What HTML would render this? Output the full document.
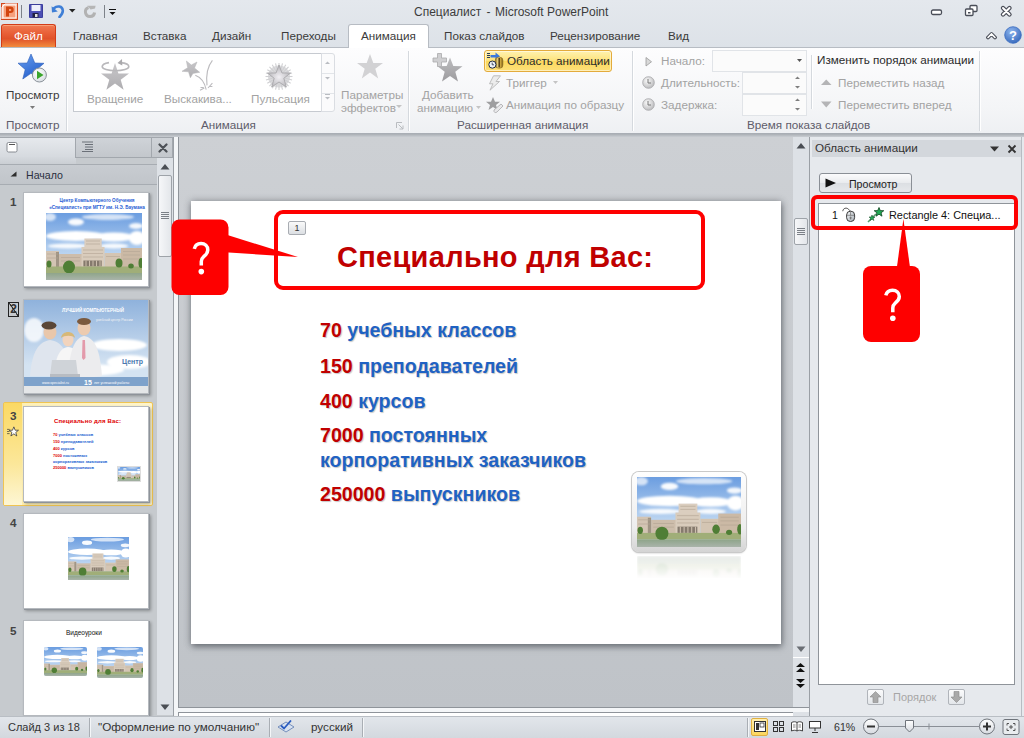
<!DOCTYPE html>
<html><head><meta charset="utf-8">
<style>
*{margin:0;padding:0;box-sizing:border-box}
html,body{width:1024px;height:738px;overflow:hidden;background:#dfe4ea;font-family:"Liberation Sans",sans-serif;font-size:11.7px;color:#3b3b3b}
.a{position:absolute}
.t{position:absolute;white-space:nowrap;line-height:14px}
.dis{color:#a3a3a3}
.gl{position:absolute;white-space:nowrap;color:#5e5c6a;top:117.5px;line-height:14px}
.sep{position:absolute;top:51px;height:80px;width:1px;background:#d5d9de;box-shadow:1px 0 0 #fff}
.th{background:#fff;box-shadow:1px 1px 0 #8e939a,2px 2px 3px rgba(0,0,0,.3);border:1px solid #b5b9be;overflow:hidden}
.photo{background:linear-gradient(#6e9bd6 0%,#a8c6ea 20%,#e9f0f6 38%,#cfdff0 45%,#d9cbbb 50%,#c4ad95 62%,#a68f78 72%,#4f6f3a 80%,#8ea48c 86%,#b9c6c0 100%)}
</style></head><body>
<svg width="0" height="0" style="position:absolute">
<defs>
<linearGradient id="sky" x1="0" y1="0" x2="0" y2="1"><stop offset="0" stop-color="#6b9de0"/><stop offset="0.6" stop-color="#b9d3f0"/></linearGradient>
<linearGradient id="wat" x1="0" y1="0" x2="0" y2="1"><stop offset="0" stop-color="#8fa58a"/><stop offset="1" stop-color="#a9b4aa"/></linearGradient>
<filter id="bl" x="-20%" y="-50%" width="140%" height="200%"><feGaussianBlur stdDeviation="1.2"/></filter>
<filter id="bl2"><feGaussianBlur stdDeviation="0.5"/></filter>
<symbol id="ph" viewBox="0 0 96 67" preserveAspectRatio="none">
<rect width="96" height="67" fill="url(#sky)"/>
<g fill="#fff" filter="url(#bl)">
<ellipse cx="30" cy="9" rx="8" ry="3.5" opacity="0.95"/>
<ellipse cx="62" cy="4" rx="26" ry="3" opacity="0.7"/>
<ellipse cx="4" cy="4" rx="6" ry="4" opacity="0.7"/>
<ellipse cx="90" cy="13" rx="7" ry="3" opacity="0.9"/>
<ellipse cx="30" cy="23" rx="30" ry="5"/>
<ellipse cx="68" cy="24" rx="20" ry="4.5"/>
<ellipse cx="91" cy="25" rx="8" ry="7"/>
<ellipse cx="22" cy="33" rx="20" ry="2.5" opacity="0.9"/>
<ellipse cx="68" cy="33" rx="14" ry="2.5" opacity="0.9"/>
</g>
<g filter="url(#bl2)">
<rect x="0" y="38" width="13" height="16" fill="#d3c4b3"/>
<rect x="13" y="41" width="23" height="13" fill="#cdbdab"/>
<rect x="35.5" y="34" width="23" height="20" fill="#d9ccbc"/>
<rect x="38.4" y="25.5" width="17.3" height="10" fill="#dbcebf"/>
<rect x="58.6" y="40" width="17" height="14" fill="#d4c5b3"/>
<rect x="75" y="35" width="21" height="19" fill="#cbb9a5"/>
<rect x="37.4" y="47.5" width="18.3" height="6" fill="#857a6d"/><path d="M40 47.5v6M43.5 47.5v6M47 47.5v6M50.5 47.5v6M54 47.5v6" stroke="#cdbfae" stroke-width="1"/>
<rect x="10" y="39" width="3" height="15" fill="#a09484"/>
<path d="M40 28h14M40 31h14M37 37h20M37 40.5h20M37 44h20M60 43.5h14M77 38.5h17M77 42h17M77 46h17M1 41h11M1 45h11M15 44.5h19M15 48h19" stroke="#b4a594" stroke-width="0.6"/>
</g>
<rect x="0" y="53.5" width="96" height="6.5" fill="#a0ae78"/>
<g fill="#4f7e36" filter="url(#bl2)">
<ellipse cx="23" cy="54" rx="6" ry="6.5"/>
<ellipse cx="3" cy="51" rx="2.5" ry="3.5"/>
<ellipse cx="73" cy="50" rx="3.5" ry="4.5"/>
<ellipse cx="85" cy="53" rx="2.8" ry="2.5"/>
<ellipse cx="95" cy="50" rx="2.5" ry="5"/>
</g>
<rect x="0" y="60" width="96" height="7" fill="url(#wat)"/>
</symbol>
</defs></svg>
<!-- title bar -->
<div class="a" style="left:0;top:0;width:1024px;height:47px;background:linear-gradient(#e4e8ed,#dde2e8)"></div>
<div class="t" style="left:414px;top:5px;font-size:12px;color:#3c3c3c">Специалист</div><div class="t" style="left:486.5px;top:5px;font-size:12px;color:#3c3c3c">-</div><div class="t" style="left:495px;top:5px;font-size:12px;color:#3c3c3c">Microsoft PowerPoint</div>


<!-- QAT -->
<svg class="a" style="left:1px;top:3px" width="17" height="17" viewBox="0 0 17 17">
<rect x="0.5" y="0.5" width="16" height="16" fill="#f7a07c" stroke="#d2461c"/>
<path d="M1 16V4L4 1H16" fill="none" stroke="#fff" stroke-width="1"/>
<rect x="2" y="2" width="13" height="13" fill="none" stroke="#fff" stroke-width="1"/>
<path d="M5 3.5h4.5a3.2 3.2 0 0 1 0 6.4H8v3.6H5z M8 6v2h1.3a1 1 0 0 0 0-2z" fill="#d2450f" fill-rule="evenodd"/>
</svg>
<div class="a" style="left:21px;top:5px;width:1px;height:13px;background:#7d8289"></div>
<svg class="a" style="left:29px;top:4px" width="14" height="14" viewBox="0 0 14 14">
<rect x="0" y="0" width="14" height="14" rx="1" fill="#4c4fb5"/>
<rect x="0.5" y="0.5" width="13" height="13" rx="1" fill="none" stroke="#3b3e9a"/>
<rect x="2.5" y="1" width="9" height="6" fill="#eef0fb"/>
<rect x="3.5" y="9" width="6" height="4.5" fill="#202040"/>
<rect x="6" y="10" width="2.5" height="3" fill="#e0e0e0"/>
</svg>
<svg class="a" style="left:51px;top:4px" width="14" height="14" viewBox="0 0 14 14">
<path d="M3 4.2 C6 1.5 11.5 1.8 11.8 6.5 C12 9.5 10 11.5 8.5 13" fill="none" stroke="#3f7fd6" stroke-width="2.6" stroke-linecap="round"/>
<path d="M0.6 2.2 L1 8.6 L6.8 7.6z" fill="#3f7fd6"/>
</svg>
<svg class="a" style="left:69px;top:9px" width="7" height="4"><path d="M0 0h6.5L3.25 3.5z" fill="#222"/></svg>
<svg class="a" style="left:83px;top:4px" width="15" height="15" viewBox="0 0 15 15">
<path d="M5.5 3.6 A4.6 4.6 0 1 0 11.6 8.5" fill="none" stroke="#b2b2b2" stroke-width="3"/>
<path d="M4.3 1.8 L12.6 1.8 L12 4.6 L7.6 5.6z" fill="#b6b6b6"/>
</svg>
<div class="a" style="left:104px;top:5px;width:1px;height:13px;background:#7d8289"></div>
<div class="a" style="left:109px;top:9px;width:7px;height:1px;background:#111"></div>
<svg class="a" style="left:109px;top:12px" width="7" height="4"><path d="M0.5 0h6L3.5 3z" fill="#111"/></svg>

<!-- window controls -->
<svg class="a" style="left:930px;top:4px" width="85" height="14" viewBox="0 0 85 14">
<rect x="1.5" y="6" width="10" height="4.5" rx="1.5" fill="#fff" stroke="#4a4e58" stroke-width="1.3"/>
<rect x="40" y="1.5" width="7" height="6" rx="1" fill="#fff" stroke="#4a4e58" stroke-width="1.3"/>
<rect x="35.5" y="5" width="7.5" height="6.5" rx="1" fill="#fff" stroke="#4a4e58" stroke-width="1.3"/>
<rect x="38" y="8" width="2.5" height="1.5" fill="#4a4e58"/>
<path d="M73 4l6.5 6.5M79.5 4l-6.5 6.5" stroke="#4a4e58" stroke-width="4.4" stroke-linecap="round"/>
<path d="M73 4l6.5 6.5M79.5 4l-6.5 6.5" stroke="#fff" stroke-width="2" stroke-linecap="round"/>
</svg>
<svg class="a" style="left:986px;top:31px" width="11" height="9" viewBox="0 0 11 9">
<path d="M2 6.5L5.5 3L9 6.5" fill="none" stroke="#4a4e58" stroke-width="3.8" stroke-linejoin="round" stroke-linecap="round"/>
<path d="M2 6.5L5.5 3L9 6.5" fill="none" stroke="#fff" stroke-width="1.6" stroke-linecap="round"/>
</svg>
<svg class="a" style="left:1004px;top:26px" width="18" height="18" viewBox="0 0 18 18">
<defs><radialGradient id="hg" cx="0.4" cy="0.3" r="0.8"><stop offset="0" stop-color="#8fb6ee"/><stop offset="1" stop-color="#2f62b8"/></radialGradient></defs>
<circle cx="9" cy="9" r="8.3" fill="url(#hg)" stroke="#3a6cc0" stroke-width="0.8"/>
<text x="9" y="13.6" text-anchor="middle" font-family="Liberation Sans" font-weight="bold" font-size="13" fill="#fff">?</text>
</svg>

<!-- tabs -->
<div class="a" style="left:1px;top:24px;width:55px;height:23px;border-radius:3px 3px 0 0;background:linear-gradient(#f07a52,#e85e36 40%,#e0522a 62%,#f28c3e);border:1px solid #d23c18;border-bottom:none;box-shadow:inset 0 1px 0 rgba(255,200,160,.5)"></div>
<div class="t" style="left:14px;top:29px;color:#fff">Файл</div>
<div class="t" style="left:73px;top:29px">Главная</div>
<div class="t" style="left:143px;top:29px">Вставка</div>
<div class="t" style="left:212px;top:29px">Дизайн</div>
<div class="t" style="left:281px;top:29px">Переходы</div>
<div class="a" style="left:348px;top:24px;width:81px;height:24px;border-radius:3px 3px 0 0;background:#fff;border:1px solid #b7bcc3;border-bottom:none;z-index:2"></div>
<div class="t" style="left:361px;top:29px;z-index:3">Анимация</div>
<div class="t" style="left:444px;top:29px">Показ слайдов</div>
<div class="t" style="left:550px;top:29px">Рецензирование</div>
<div class="t" style="left:668px;top:29px">Вид</div>

<!-- ribbon -->
<div class="a" style="left:0;top:47px;width:1024px;height:87px;background:linear-gradient(#fdfdfe,#f4f5f7 70%,#eef0f3);border-top:1px solid #b7bcc3;border-bottom:1px solid #a9aeb5"></div>
<div class="sep" style="left:66px"></div>
<div class="sep" style="left:408px"></div>
<div class="sep" style="left:632px"></div>
<div class="sep" style="left:979px"></div>

<div class="gl" style="left:6px">Просмотр</div>
<div class="gl" style="left:201px">Анимация</div>
<div class="gl" style="left:457px">Расширенная анимация</div>
<div class="gl" style="left:747px">Время показа слайдов</div>


<!-- Просмотр group -->
<svg class="a" style="left:16px;top:52px" width="34" height="34" viewBox="0 0 34 34">
<defs><linearGradient id="bs" x1="0" y1="0" x2="0.6" y2="1"><stop offset="0" stop-color="#6aa0f0"/><stop offset="1" stop-color="#2560cc"/></linearGradient>
<radialGradient id="pc" cx="0.4" cy="0.35" r="0.7"><stop offset="0" stop-color="#fff"/><stop offset="1" stop-color="#d7dce2"/></radialGradient></defs>
<path d="M15 2 L18.8 11 L28 11.3 L21 17.3 L23.6 26.5 L15 21.3 L6.8 27 L9.2 17.5 L2 11.2 L11.2 11z" fill="url(#bs)" stroke="#2a5cb8" stroke-width="0.6"/>
<circle cx="23.4" cy="23" r="7" fill="url(#pc)" stroke="#8c939b" stroke-width="1"/>
<path d="M21 18.8 L27.5 23 L21 27.2z" fill="#3aa52c"/>
</svg>
<div class="t" style="left:6px;top:87.5px;color:#3b3b3b">Просмотр</div>
<svg class="a" style="left:30px;top:106px" width="6" height="4"><path d="M0 0h5L2.5 3z" fill="#7a7a7a"/></svg>

<!-- Анимация gallery -->
<div class="a" style="left:73px;top:53px;width:249px;height:59px;background:#fff;border:1px solid #c6cad0"></div>
<div class="a" style="left:321px;top:53px;width:14px;height:59px;background:#fbfbfc;border:1px solid #dadde2;border-radius:0 3px 3px 0"></div>
<div class="a" style="left:322px;top:73px;width:12px;height:1px;background:#e2e5e9"></div>
<div class="a" style="left:322px;top:93px;width:12px;height:1px;background:#e2e5e9"></div>
<svg class="a" style="left:324px;top:60px" width="8" height="46" viewBox="0 0 8 46">
<path d="M1 4h5L3.5 1.5z" fill="#b9bcc1"/><path d="M1 17h5L3.5 19.5z" fill="#b9bcc1"/>
<rect x="1" y="34" width="5" height="1" fill="#b9bcc1"/><path d="M1 37h5L3.5 39.5z" fill="#b9bcc1"/>
</svg>
<svg class="a" style="left:99px;top:58px" width="32" height="34" viewBox="0 0 32 34">
<defs><linearGradient id="gs" x1="0" y1="0" x2="0" y2="1"><stop offset="0" stop-color="#c9c8cb"/><stop offset="1" stop-color="#aeadb0"/></linearGradient></defs>
<path d="M16 5 L19.4 15.5 L30 15.5 L21.7 21.8 L24.6 31.7 L16 25.6 L7.4 31.7 L10.3 21.8 L2 15.5 L12.6 15.5z" fill="url(#gs)"/>
<path d="M10 4.6 C5 5.5 3.2 7 3.2 8.6 C3.2 11 9 12.8 16.5 12.8 C24 12.8 29.8 11 29.8 8.6 C29.8 6.6 26 5 21.5 4.6" fill="none" stroke="#b9b8bb" stroke-width="1.6"/>
<path d="M18.5 5 L23 1 L23.3 7.5z" fill="#aaa9ac"/>
</svg>
<div class="t dis" style="left:87px;top:91.5px">Вращение</div>
<svg class="a" style="left:180px;top:58px" width="36" height="36" viewBox="0 0 36 36">
<path d="M6.4 3 L11.3 7 L17 4 L14.5 10 L19.7 14.3 L12.9 15.4 L10.4 19.8 L8.5 13.8 L2 13.3 L7.7 9.7z" fill="url(#gs)" stroke="#b5b4b7" stroke-width="0.5"/>
<path d="M32.4 2.4 C27 9 26 18 27 27.4 M15.3 17.3 C20 19 24.5 24 26.2 31.7 M20 32.2 L24.3 30 M20.5 29.5 H23.7 M28 30 L32.4 25.2 M29 28.5 H32.4" fill="none" stroke="#bcbbbe" stroke-width="1.1"/>
</svg>
<div class="t dis" style="left:164px;top:91.5px">Выскакива...</div>
<svg class="a" style="left:264px;top:62px" width="30" height="30" viewBox="0 0 30 30">
<defs><radialGradient id="pg" cx="0.5" cy="0.5" r="0.5"><stop offset="0.5" stop-color="#d4d4d6"/><stop offset="1" stop-color="#e8e8ea" stop-opacity="0.3"/></radialGradient>
<radialGradient id="ps" cx="0.5" cy="0.55" r="0.5"><stop offset="0" stop-color="#f2f0f4"/><stop offset="1" stop-color="#b9b8bc"/></radialGradient></defs>
<circle cx="15" cy="14.5" r="11" fill="#dcdcde"/><line x1="15" y1="14.5" x2="28.50" y2="14.50" stroke="#cfcfd2" stroke-width="1.1"/><line x1="15" y1="14.5" x2="28.04" y2="17.99" stroke="#cfcfd2" stroke-width="1.1"/><line x1="15" y1="14.5" x2="26.69" y2="21.25" stroke="#cfcfd2" stroke-width="1.1"/><line x1="15" y1="14.5" x2="24.55" y2="24.05" stroke="#cfcfd2" stroke-width="1.1"/><line x1="15" y1="14.5" x2="21.75" y2="26.19" stroke="#cfcfd2" stroke-width="1.1"/><line x1="15" y1="14.5" x2="18.49" y2="27.54" stroke="#cfcfd2" stroke-width="1.1"/><line x1="15" y1="14.5" x2="15.00" y2="28.00" stroke="#cfcfd2" stroke-width="1.1"/><line x1="15" y1="14.5" x2="11.51" y2="27.54" stroke="#cfcfd2" stroke-width="1.1"/><line x1="15" y1="14.5" x2="8.25" y2="26.19" stroke="#cfcfd2" stroke-width="1.1"/><line x1="15" y1="14.5" x2="5.45" y2="24.05" stroke="#cfcfd2" stroke-width="1.1"/><line x1="15" y1="14.5" x2="3.31" y2="21.25" stroke="#cfcfd2" stroke-width="1.1"/><line x1="15" y1="14.5" x2="1.96" y2="17.99" stroke="#cfcfd2" stroke-width="1.1"/><line x1="15" y1="14.5" x2="1.50" y2="14.50" stroke="#cfcfd2" stroke-width="1.1"/><line x1="15" y1="14.5" x2="1.96" y2="11.01" stroke="#cfcfd2" stroke-width="1.1"/><line x1="15" y1="14.5" x2="3.31" y2="7.75" stroke="#cfcfd2" stroke-width="1.1"/><line x1="15" y1="14.5" x2="5.45" y2="4.95" stroke="#cfcfd2" stroke-width="1.1"/><line x1="15" y1="14.5" x2="8.25" y2="2.81" stroke="#cfcfd2" stroke-width="1.1"/><line x1="15" y1="14.5" x2="11.51" y2="1.46" stroke="#cfcfd2" stroke-width="1.1"/><line x1="15" y1="14.5" x2="15.00" y2="1.00" stroke="#cfcfd2" stroke-width="1.1"/><line x1="15" y1="14.5" x2="18.49" y2="1.46" stroke="#cfcfd2" stroke-width="1.1"/><line x1="15" y1="14.5" x2="21.75" y2="2.81" stroke="#cfcfd2" stroke-width="1.1"/><line x1="15" y1="14.5" x2="24.55" y2="4.95" stroke="#cfcfd2" stroke-width="1.1"/><line x1="15" y1="14.5" x2="26.69" y2="7.75" stroke="#cfcfd2" stroke-width="1.1"/><line x1="15" y1="14.5" x2="28.04" y2="11.01" stroke="#cfcfd2" stroke-width="1.1"/>
<path d="M15 3 L18 11 L26.5 11 L19.8 16.3 L22.3 25 L15 20 L7.7 25 L10.2 16.3 L3.5 11 L12 11z" fill="url(#ps)" stroke="#a9a8ac" stroke-width="0.9"/>
</svg>
<div class="t dis" style="left:251px;top:91.5px">Пульсация</div>

<svg class="a" style="left:356px;top:53px" width="28" height="27" viewBox="0 0 28 27">
<path d="M14 1 L17.3 10 L27 10 L19.3 15.8 L22.2 25.5 L14 19.6 L5.8 25.5 L8.7 15.8 L1 10 L10.7 10z" fill="#d2d2d4"/>
</svg>
<div class="t dis" style="left:341px;top:87.5px;line-height:13px">Параметры<br>эффектов</div>
<svg class="a" style="left:396px;top:105px" width="7" height="4"><path d="M0 0h6L3 3z" fill="#c4c4c4"/></svg>
<svg class="a" style="left:396px;top:122px" width="8" height="8" viewBox="0 0 8 8"><path d="M0.5 6V0.5H6" fill="none" stroke="#b9bcc0"/><path d="M2.5 2.5L7 7M7 3.5V7H3.5" fill="none" stroke="#b9bcc0"/></svg>

<!-- Расширенная анимация -->
<svg class="a" style="left:432px;top:52px" width="32" height="32" viewBox="0 0 32 32">
<defs><linearGradient id="gs2" x1="0" y1="0" x2="0" y2="1"><stop offset="0" stop-color="#bdbdbf"/><stop offset="1" stop-color="#9c9b9e"/></linearGradient></defs>
<path d="M5.5 1.5h4v4.5h5v4h-5v4.5h-4v-4.5h-4.5v-4h4.5z" fill="#cfcfd1" stroke="#a9a9ab" stroke-width="0.8"/>
<path d="M18 5.5 L21.3 14 L30.5 14.3 L23.3 19.8 L26 29.5 L18 24 L10 29.5 L12.7 19.8 L5.5 14.3 L14.7 14z" fill="url(#gs2)"/>
</svg>
<div class="t dis" style="left:422px;top:87.5px">Добавить</div>
<div class="t dis" style="left:417px;top:100.5px">анимацию</div>
<svg class="a" style="left:476px;top:106px" width="6" height="4"><path d="M0 0h5L2.5 3z" fill="#c4c4c4"/></svg>

<div class="a" style="left:484px;top:50px;width:128px;height:22px;border:1px solid #e3ab3c;border-radius:3px;background:linear-gradient(#fff2b0,#fde27a 50%,#fcd95c 51%,#fde07a);box-shadow:inset 0 0 0 1px rgba(255,255,255,.5)"></div>
<svg class="a" style="left:487px;top:52px" width="18" height="18" viewBox="0 0 18 18">
<defs><linearGradient id="gd" x1="0" y1="0" x2="1" y2="0"><stop offset="0" stop-color="#8a6a1a"/><stop offset="0.35" stop-color="#f3dc8a"/><stop offset="0.7" stop-color="#c9a23a"/><stop offset="1" stop-color="#7a5c18"/></linearGradient></defs>
<path d="M0 1.5h3M0 3.5h3M0 5.5h3" stroke="#2a3a5a" stroke-width="1"/>
<path d="M3.5 3h5v-2.5l4.5 3.8-4.5 3.8v-2.6h-5z" fill="#3a78de"/>
<rect x="8.3" y="5.2" width="7.6" height="11" rx="3.2" fill="url(#gd)" stroke="#8a6a20" stroke-width="0.6"/>
<rect x="11.4" y="6" width="1.6" height="9.4" fill="#5a4418"/>
<circle cx="5.4" cy="12.6" r="3.6" fill="#eef2f8" stroke="#1e2a44" stroke-width="1"/>
<path d="M5.2 10.6v2.2h1.8" stroke="#1e2a44" stroke-width="0.8" fill="none"/>
</svg>
<div class="t" style="left:507px;top:53.5px;color:#2c2c2c">Область анимации</div>
<svg class="a" style="left:487px;top:75px" width="15" height="16" viewBox="0 0 15 16">
<path d="M6.5 0.8 L13.5 0.8 L9 6.5 L12.5 6.5 L3 15.2 L6 8.8 L2.5 8.8z" fill="#ececec" stroke="#bdbdbd" stroke-width="1"/>
</svg>
<div class="t dis" style="left:506px;top:75.5px">Триггер</div>
<svg class="a" style="left:553px;top:81px" width="6" height="4"><path d="M0 0h5L2.5 3z" fill="#c4c4c4"/></svg>
<svg class="a" style="left:486px;top:96px" width="18" height="18" viewBox="0 0 18 18">
<path d="M7 1 L9 5.8 L14 5.8 L10 9 L11.5 14 L7 11 L2.5 14 L4 9 L0 5.8 L5 5.8z" fill="#9e9ea0"/>
<path d="M8 14 L15 8 L17 10 L11 16 C9.5 17.3 7.5 16.5 8 14z" fill="#e8e8ea" stroke="#b0b0b2" stroke-width="0.9"/>
</svg>
<div class="t dis" style="left:506px;top:97.5px">Анимация по образцу</div>

<!-- Время показа -->
<svg class="a" style="left:645px;top:57px" width="8" height="10"><path d="M1 0.5L6.5 4.75L1 9z" fill="#d9d9d9" stroke="#9a9a9a" stroke-width="0.8"/></svg>
<div class="t dis" style="left:661px;top:53.5px">Начало:</div>
<div class="a" style="left:712px;top:50px;width:95px;height:22px;border:1px solid #e1e4e8;background:#fbfbfb"></div>
<svg class="a" style="left:797px;top:59px" width="6" height="4"><path d="M0 0h5L2.5 3z" fill="#555"/></svg>
<svg class="a" style="left:642px;top:76px" width="13" height="13" viewBox="0 0 13 13"><defs><radialGradient id="cg" cx="0.4" cy="0.35" r="0.7"><stop offset="0" stop-color="#fafafa"/><stop offset="1" stop-color="#b9b9bb"/></radialGradient></defs><circle cx="6.5" cy="6.5" r="5.8" fill="url(#cg)" stroke="#a5a5a7" stroke-width="0.8"/><path d="M6 3v4h3" fill="none" stroke="#777" stroke-width="1"/></svg>
<div class="t dis" style="left:661px;top:75.5px">Длительность:</div>
<div class="a" style="left:742px;top:72px;width:65px;height:22px;border:1px solid #e1e4e8;background:#fbfbfb"></div>
<svg class="a" style="left:642px;top:98px" width="13" height="13" viewBox="0 0 13 13"><circle cx="6.5" cy="6.5" r="5.8" fill="url(#cg)" stroke="#a5a5a7" stroke-width="0.8"/><path d="M6 3v4h3" fill="none" stroke="#777" stroke-width="1"/></svg>
<div class="t dis" style="left:661px;top:97.5px">Задержка:</div>
<div class="a" style="left:742px;top:94px;width:65px;height:22px;border:1px solid #e1e4e8;background:#fbfbfb"></div>
<svg class="a" style="left:795px;top:76px" width="6" height="40" viewBox="0 0 6 40">
<path d="M0 3h5L2.5 0.5z M0 10h5L2.5 12.5z M0 25h5L2.5 22.5z M0 32h5L2.5 34.5z" fill="#7e7e7e"/>
</svg>
<div class="a" style="left:811px;top:55px;width:1px;height:54px;background:#d5d9de;box-shadow:1px 0 0 #fff"></div>
<div class="t" style="left:817px;top:53px;color:#2c2c2c">Изменить порядок анимации</div>
<svg class="a" style="left:821px;top:79px" width="11" height="7"><path d="M0 6h10.5L5.25 0.5z" fill="#b4b4b6"/></svg>
<div class="t dis" style="left:838px;top:75.5px">Переместить назад</div>
<svg class="a" style="left:821px;top:101px" width="11" height="7"><path d="M0 0.5h10.5L5.25 6.5z" fill="#b4b4b6"/></svg>
<div class="t dis" style="left:838px;top:98px">Переместить вперед</div>

<!-- workspace -->
<div class="a" style="left:0;top:134px;width:1024px;height:582px;background:linear-gradient(#a9aeb4,#c9cdd2 3px)"></div>
<!-- left panel -->
<div class="a" style="left:0;top:137px;width:174px;height:579px;background:#c6cace;border-right:1px solid #9a9fa5"></div>
<div class="a" style="left:0;top:137px;width:173px;height:21px;background:linear-gradient(#e6e9ed,#d5d9de);border-top:1px solid #a2a7ad"></div>
<div class="a" style="left:0;top:157px;width:76px;height:8px;background:linear-gradient(#d5d9de,#c9cdd2)"></div>
<div class="a" style="left:75px;top:137px;width:77px;height:21px;background:linear-gradient(#cfd3d8,#c3c7cc);border:1px solid #a2a7ad;border-right:none"></div>
<div class="a" style="left:76px;top:157px;width:97px;height:1px;background:#a2a7ad"></div>
<div class="a" style="left:151px;top:137px;width:22px;height:21px;background:linear-gradient(#cfd3d8,#c3c7cc);border:1px solid #a2a7ad"></div>
<svg class="a" style="left:6px;top:142px" width="12" height="11" viewBox="0 0 12 11"><rect x="1" y="0.5" width="10" height="9.5" rx="1.5" fill="#fff" stroke="#7a7f86" stroke-width="0.9"/><rect x="3" y="2" width="6" height="1" fill="#555"/></svg>
<svg class="a" style="left:81px;top:141px" width="13" height="11" viewBox="0 0 13 11"><path d="M1 1h11M4 3.5h8M4 6h8M4 8.5h8M1 10.5h11" stroke="#6b7078" stroke-width="1"/></svg>
<svg class="a" style="left:158px;top:143px" width="10" height="10" viewBox="0 0 10 10"><path d="M1.5 1.5l7 7M8.5 1.5l-7 7" stroke="#4d5157" stroke-width="2.2" stroke-linecap="round"/></svg>
<div class="a" style="left:0;top:164px;width:157px;height:21px;background:linear-gradient(#c8ccd1,#c1c5ca);border-top:1px solid #a7acb2;border-bottom:1px solid #a7acb2"></div>
<svg class="a" style="left:10px;top:171px" width="7" height="6"><path d="M6.5 0.5V5.5H0.5z" fill="#2d2d2d"/></svg>
<div class="t" style="left:26px;top:168px;font-size:10.6px;color:#2b2f40">Начало</div>
<!-- left scrollbar -->
<div class="a" style="left:157px;top:158px;width:16px;height:557px;background:#dde1e6"></div>
<svg class="a" style="left:160px;top:163px" width="10" height="7"><path d="M0.5 6.5h9L5 1z" fill="#4a4e54"/></svg>
<div class="a" style="left:158px;top:175px;width:14px;height:82px;background:linear-gradient(90deg,#f6f7f9,#e3e6ea);border:1px solid #9ea3a9;border-radius:2px"></div>
<div class="a" style="left:161px;top:212px;width:8px;height:7px;background:repeating-linear-gradient(#7b8087 0 1px,transparent 1px 2px)"></div>
<svg class="a" style="left:160px;top:704px" width="10" height="7"><path d="M0.5 0.5h9L5 6z" fill="#4a4e54"/></svg>
<div class="a" style="left:174px;top:137px;width:4px;height:579px;background:#f4f6f8"></div>

<!-- thumbnails -->
<div class="t" style="left:10px;top:195px;font-weight:bold;color:#444">1</div>
<div class="a th" style="left:23px;top:192px;width:126px;height:95px">
  <div class="a" style="left:18px;top:5px;width:110px;text-align:center;font-size:4.6px;line-height:6.5px;color:#1f5bd4;font-weight:bold;white-space:nowrap">Центр Компьютерного Обучения<br>«Специалист» при МГТУ им. Н.Э. Баумана</div>
  <svg class="a" style="left:22px;top:20px;width:96px;height:67px"><use href="#ph" width="100%" height="100%"/></svg>
</div>
<div class="a" style="left:8px;top:302px;width:11px;height:15px;border:1px solid #222;font-weight:bold;font-size:12px;line-height:13px;text-align:center;color:#333;background:linear-gradient(to top right,transparent 46%,#333 48%,#333 54%,transparent 56%)">2</div>
<div class="a th" style="left:23px;top:299px;width:126px;height:95px">
<svg class="a" style="left:0;top:0" width="124" height="93" viewBox="0 0 124 93">
<defs><linearGradient id="s2" x1="0" y1="0" x2="0" y2="1"><stop offset="0" stop-color="#8fb2dc"/><stop offset="0.7" stop-color="#d4e3f2"/></linearGradient></defs>
<rect width="124" height="93" fill="url(#s2)"/>
<g fill="#fff" filter="url(#bl)"><ellipse cx="95" cy="45" rx="28" ry="6"/><ellipse cx="105" cy="62" rx="22" ry="7"/><ellipse cx="10" cy="30" rx="10" ry="12" opacity="0.8"/><ellipse cx="60" cy="70" rx="40" ry="6"/></g>
<text x="38" y="12" font-family="Liberation Sans" font-size="4.5" font-weight="bold" fill="#fff">ЛУЧШИЙ КОМПЬЮТЕРНЫЙ</text>
<text x="72" y="21" font-family="Liberation Sans" font-size="3.5" fill="#f4f4f4">учебный центр России</text>
<path d="M6 76 C8 52 14 42 26 40 C38 42 44 50 46 76z" fill="#dfe5ee"/>
<ellipse cx="26" cy="32" rx="6.5" ry="7.5" fill="#e9c7ab"/>
<ellipse cx="25" cy="25.5" rx="7.5" ry="4" fill="#5a4636"/>
<path d="M30 78 C31 56 36 48 44 47 C54 48 58 56 60 78z" fill="#f6f6f6"/>
<ellipse cx="44" cy="40" rx="5.5" ry="6.5" fill="#f2d4bd"/>
<path d="M37 38 C38 30 50 30 51 38 C49 35 40 35 37 38z" fill="#d7b878"/>
<path d="M44 80 C45 52 50 38 60 36 C72 38 76 52 78 76z" fill="#ececee"/>
<path d="M58.5 40 L61 40 L61.5 58 L59.5 60 L58 58z" fill="#e39aab"/>
<ellipse cx="60" cy="28" rx="6.5" ry="7.5" fill="#eccbb0"/>
<ellipse cx="60" cy="21.5" rx="7" ry="3.5" fill="#7b5a3e"/>
<path d="M28 60 H52 L54 76 H26z" fill="#cfd3d8"/>
<rect x="26" y="74" width="30" height="3" fill="#b8bcc2"/>
<text x="98" y="64" font-family="Liberation Sans" font-size="7" font-weight="bold" fill="#4a78b0">Центр</text>
<rect x="0" y="77" width="124" height="9" fill="#7ea2cb"/>
<text x="18" y="83.5" font-family="Liberation Sans" font-size="3.5" fill="#fff">www.specialist.ru</text>
<text x="60" y="84.5" font-family="Liberation Sans" font-size="7" font-weight="bold" fill="#fff">15</text>
<text x="70" y="84" font-family="Liberation Sans" font-size="3.5" fill="#fff">лет успешной работы</text>
<rect x="0" y="86" width="124" height="7" fill="#e4e6e8"/>
</svg>
</div>
<div class="a" style="left:3px;top:402px;width:150px;height:104px;border:1px solid #f0c451;border-radius:2px;background:linear-gradient(90deg,#f8d86c,#fdf0b8 14%,#fdf4cc 100%)"></div>
<div class="a" style="left:4px;top:403px;width:18px;height:102px;background:linear-gradient(#fbd964,#fbe79a 60%,#fdf6d4)"></div>
<div class="t" style="left:10px;top:409px;font-weight:bold;color:#444">3</div>
<svg class="a" style="left:7px;top:426px" width="12" height="11" viewBox="0 0 14 13"><path d="M8 1 L9.6 5 L13.5 5 L10.3 7.6 L11.5 11.8 L8 9.3 L4.5 11.8 L5.7 7.6 L2.5 5 L6.4 5z" fill="#fff" stroke="#333" stroke-width="0.9"/><path d="M0 4h3M0 6.5h3M0 9h3" stroke="#333" stroke-width="0.8"/></svg>
<div class="a th" style="left:23px;top:406px;width:126px;height:96px">
  <div class="a" style="left:30px;top:10px;font-size:6px;line-height:8px;color:#e00000;font-weight:bold;letter-spacing:0.15px;white-space:nowrap">Специально для Вас:</div>
  <div class="a" style="left:29px;top:0;font-size:4px;line-height:5px;color:#2060d0;font-weight:bold;white-space:nowrap">
<div class="a" style="top:25px"><span style="color:#d00">70</span> учебных классов</div>
<div class="a" style="top:32px"><span style="color:#d00">150</span> преподавателей</div>
<div class="a" style="top:39px"><span style="color:#d00">400</span> курсов</div>
<div class="a" style="top:46px"><span style="color:#d00">7000</span> постоянных</div>
<div class="a" style="top:51.5px">корпоративных заказчиков</div>
<div class="a" style="top:58px"><span style="color:#d00">250000</span> выпускников</div>
</div>
  <svg class="a" style="left:93px;top:59px;width:24px;height:16px;border:1px solid #ddd"><use href="#ph" width="100%" height="100%"/></svg>
</div>
<div class="t" style="left:10px;top:516px;font-weight:bold;color:#444">4</div>
<div class="a th" style="left:23px;top:513px;width:126px;height:96px">
  <svg class="a" style="left:44px;top:23px;width:61px;height:43px"><use href="#ph" width="100%" height="100%"/></svg>
</div>
<div class="t" style="left:10px;top:624px;font-weight:bold;color:#444">5</div>
<div class="a th" style="left:23px;top:620px;width:126px;height:96px">
  <div class="a" style="left:42px;top:8px;font-size:6.5px;color:#111">Видеоуроки</div>
  <svg class="a" style="left:20px;top:26px;width:43px;height:29px;border-radius:2px"><use href="#ph" width="100%" height="100%"/></svg>
  <svg class="a" style="left:73px;top:26px;width:46px;height:31px;border-radius:2px"><use href="#ph" width="100%" height="100%"/></svg>
</div>

<!-- slide area -->
<div class="a" style="left:178px;top:137px;width:615px;height:571px;background:linear-gradient(#cdd0d4,#bfc3c8);border-left:1px solid #8f949a;border-bottom:1px solid #8f949a"></div>
<div class="a" style="left:191px;top:201px;width:590px;height:443px;background:#fff;box-shadow:0 0 7px rgba(60,66,72,.4),1px 3px 6px rgba(60,66,72,.5)"></div>
<!-- slide scrollbar -->
<div class="a" style="left:793px;top:137px;width:16px;height:571px;background:#dde1e6;border-bottom:1px solid #8f949a"></div>
<svg class="a" style="left:796px;top:142px" width="10" height="7"><path d="M0.5 6.5h9L5 1z" fill="#4a4e54"/></svg>
<div class="a" style="left:794px;top:218px;width:14px;height:27px;background:linear-gradient(90deg,#f6f7f9,#e3e6ea);border:1px solid #9ea3a9;border-radius:2px"></div>
<div class="a" style="left:797px;top:228px;width:8px;height:7px;background:repeating-linear-gradient(#7b8087 0 1px,transparent 1px 2px)"></div>
<svg class="a" style="left:796px;top:646px" width="10" height="7"><path d="M0.5 0.5h9L5 6z" fill="#6a6e74"/></svg>
<div class="a" style="left:793px;top:657px;width:16px;height:1px;background:#fff"></div>
<svg class="a" style="left:795px;top:662px" width="12" height="28" viewBox="0 0 12 28"><path d="M1 5h9L5.5 1z M1 10h9L5.5 6z M1 17h9L5.5 21z M1 22h9L5.5 26z" fill="#111"/></svg>
<div class="a" style="left:174px;top:708px;width:635px;height:4px;background:#f4f6f8"></div>
<div class="a" style="left:178px;top:712px;width:615px;height:4px;background:#fff;border-top:1px solid #8f949a;border-left:1px solid #8f949a"></div>
<div class="a" style="left:793px;top:712px;width:16px;height:4px;background:#dde1e6"></div>

<!-- right panel -->
<div class="a" style="left:809px;top:137px;width:215px;height:579px;background:#e6e9ed;border-left:1px solid #9a9fa5"></div>

<!-- slide content -->
<div class="a" style="left:274px;top:210px;width:431px;height:80px;border:4px solid #fe0000;border-radius:9px"></div>
<div class="a" style="left:288px;top:221px;width:18px;height:14px;border:1px solid #a8acb2;border-radius:2px;background:linear-gradient(#fafafa,#dcdfe3);font-size:9px;line-height:12px;text-align:center;color:#333">1</div>
<div class="a" style="left:337px;top:239.5px;font-size:29px;line-height:34px;font-weight:bold;color:#c00000;white-space:nowrap;letter-spacing:0.3px">Специально для Вас:</div>
<div class="a" style="left:320px;top:318px;font-size:19.6px;font-weight:bold;line-height:24px;color:#1f62c3;white-space:nowrap;text-shadow:1px 1px 1px rgba(0,0,0,.22)">
<div class="a" style="left:0;top:0"><span style="color:#c00000">70</span> учебных классов</div>
<div class="a" style="left:0;top:36px"><span style="color:#c00000">150</span> преподавателей</div>
<div class="a" style="left:0;top:70.5px"><span style="color:#c00000">400</span> курсов</div>
<div class="a" style="left:0;top:105px"><span style="color:#c00000">7000</span> постоянных</div>
<div class="a" style="left:0;top:130px">корпоративных заказчиков</div>
<div class="a" style="left:0;top:164px"><span style="color:#c00000">250000</span> выпускников</div>
</div>
<div class="a" style="left:632px;top:472px;width:114px;height:80px;border-radius:7px;background:linear-gradient(#fefefe,#ededed 70%,#d4d4d4);box-shadow:0 0 0 1px #c9c9c9,0 1px 2px rgba(0,0,0,.3)"></div>
<svg class="a" style="left:637px;top:477px;width:104px;height:70px"><use href="#ph" width="100%" height="100%"/></svg>
<svg class="a" style="left:637px;top:556px;width:104px;height:22px;opacity:.28" viewBox="0 0 104 22" preserveAspectRatio="none"><g transform="translate(0,70) scale(1,-1)" filter="url(#bl)"><use href="#ph" width="104" height="70"/></g></svg>
<div class="a" style="left:632px;top:554px;width:114px;height:26px;background:linear-gradient(rgba(255,255,255,.1),#fff)"></div>

<!-- callout 1 -->
<svg class="a" style="left:171px;top:219px" width="128" height="77" viewBox="0 0 128 77">
<rect x="0.5" y="0.5" width="57" height="75.5" rx="8" fill="#fe0000"/>
<path d="M50 14 L127 38 L50 33z" fill="#fe0000"/>
<g transform="translate(21.5,23)"><path d="M1.8 6.8 C2.6 3.2 5 1.6 8.5 1.6 C12.5 1.6 15.3 4.2 15.3 8 C15.3 11.5 13 13.2 11 14.8 C9.3 16.2 8.8 17.4 8.8 19.5 V23.6" fill="none" stroke="#fff" stroke-width="3.5"/><circle cx="8.8" cy="29.6" r="2.8" fill="#fff"/></g>
</svg>

<!-- right panel content -->
<div class="a" style="left:812px;top:140px;width:210px;height:17px;background:#d3d7dc"></div>
<div class="t" style="left:815px;top:141px;color:#333">Область анимации</div>
<svg class="a" style="left:990px;top:146px" width="10" height="6"><path d="M0 0.5h9L4.5 5.5z" fill="#333"/></svg>
<svg class="a" style="left:1007px;top:144px" width="10" height="10" viewBox="0 0 10 10"><path d="M1.5 1.5l7 7M8.5 1.5l-7 7" stroke="#333" stroke-width="1.8"/></svg>
<div class="a" style="left:819px;top:173px;width:93px;height:20px;border:1px solid #8a8f96;border-radius:3px;background:linear-gradient(#fbfbfc,#e9ebee 50%,#dcdfe3 51%,#e6e8eb)"></div>
<svg class="a" style="left:825px;top:178px" width="12" height="10"><path d="M0.5 0.5L11 5L0.5 9.5z" fill="#111"/></svg>
<div class="t" style="left:849px;top:177px;font-size:10.6px;color:#222">Просмотр</div>
<div class="a" style="left:818px;top:203px;width:197px;height:482px;background:#fff;border:1px solid #8f949a"></div>
<div class="t" style="left:832px;top:208px;font-size:10.6px;color:#111">1</div>
<svg class="a" style="left:842px;top:207px" width="14" height="15" viewBox="0 0 14 15">
<defs><linearGradient id="mg" x1="0" y1="0" x2="1" y2="1"><stop offset="0" stop-color="#f6f8fa"/><stop offset="1" stop-color="#a9b0b8"/></linearGradient></defs>
<path d="M0.8 4.2 C1 1.2 4.5 0.2 6.5 2.2 C7.5 3.2 8 3.8 8.5 4.5" fill="none" stroke="#3a3a3a" stroke-width="0.9"/>
<rect x="4.6" y="4.2" width="8" height="10.3" rx="3.8" fill="url(#mg)" stroke="#2a2a2a" stroke-width="0.9"/>
<path d="M8.6 4.5v3.8M5 8.3h7.2" stroke="#555" stroke-width="0.6"/>
<rect x="7.8" y="9.5" width="1.6" height="3" rx="0.8" fill="#777"/>
</svg>
<svg class="a" style="left:867px;top:207px" width="18" height="16" viewBox="0 0 18 16">
<path d="M1 15 L9 7" stroke="#5aa070" stroke-width="1.6"/>
<path d="M12 0.5 L13.3 3.6 L16.8 3.7 L14.1 5.8 L15 9.2 L12 7.2 L9 9.2 L9.9 5.8 L7.2 3.7 L10.7 3.6z" fill="#22aa55" stroke="#114422" stroke-width="0.8"/>
<path d="M5 8 L5.8 10 L8 10 L6.3 11.3 L6.9 13.5 L5 12.2 L3.1 13.5 L3.7 11.3 L2 10 L4.2 10z" fill="#22aa55" stroke="#114422" stroke-width="0.5"/>
</svg>
<div class="t" style="left:889px;top:207.5px;font-size:10.9px;color:#111">Rectangle 4: Специа...</div>
<div class="a" style="left:811px;top:195px;width:207px;height:35px;border:4px solid #fe0000;border-radius:6px"></div>
<svg class="a" style="left:863px;top:219px" width="58" height="123" viewBox="0 0 58 123">
<rect x="0" y="47" width="57" height="76" rx="8" fill="#fe0000"/>
<path d="M40.4 0 L47.5 52 L33.4 52z" fill="#fe0000"/>
<g transform="translate(21,69.6)"><path d="M1.8 6.8 C2.6 3.2 5 1.6 8.5 1.6 C12.5 1.6 15.3 4.2 15.3 8 C15.3 11.5 13 13.2 11 14.8 C9.3 16.2 8.8 17.4 8.8 19.5 V23.6" fill="none" stroke="#fff" stroke-width="3.5"/><circle cx="8.8" cy="29.6" r="2.8" fill="#fff"/></g>
</svg>
<div class="a" style="left:867px;top:689px;width:17px;height:16px;border:1px solid #b0b4ba;border-radius:2px;background:linear-gradient(#fbfbfc,#e3e6ea)"></div>
<svg class="a" style="left:869px;top:691px" width="13" height="12" viewBox="0 0 13 12"><path d="M6.5 0.5L12 6H9V11.5H4V6H1z" fill="#a9a9a9" stroke="#8a8a8a" stroke-width="0.6"/></svg>
<div class="t" style="left:893px;top:690px;font-size:11px;color:#a6a6a6">Порядок</div>
<div class="a" style="left:948px;top:689px;width:17px;height:16px;border:1px solid #b0b4ba;border-radius:2px;background:linear-gradient(#fbfbfc,#e3e6ea)"></div>
<svg class="a" style="left:950px;top:691px" width="13" height="12" viewBox="0 0 13 12"><path d="M6.5 11.5L12 6H9V0.5H4V6H1z" fill="#a9a9a9" stroke="#8a8a8a" stroke-width="0.6"/></svg>
<div class="a" style="left:1021px;top:137px;width:1px;height:579px;background:#b7bcc2"></div>

<!-- status bar -->
<div class="a" style="left:0;top:716px;width:1024px;height:22px;background:linear-gradient(#e2e6eb,#d3d8de);border-top:1px solid #b9bec4"></div>
<div class="t" style="left:8px;top:720px;font-size:11px;color:#333">Слайд 3 из 18</div>
<div class="a" style="left:89px;top:718px;width:1px;height:19px;background:#a9aeb4;box-shadow:1px 0 0 #f4f6f8"></div>
<div class="t" style="left:98px;top:720px;color:#333">"Оформление по умолчанию"</div>
<div class="a" style="left:269px;top:718px;width:1px;height:19px;background:#a9aeb4;box-shadow:1px 0 0 #f4f6f8"></div>
<svg class="a" style="left:277px;top:720px" width="18" height="14" viewBox="0 0 18 14">
<path d="M1 7 L9 12 L17 7 L9 2z" fill="#d8e2f0" stroke="#5a7ab0" stroke-width="0.8"/>
<path d="M4 5.5 L7 8.5 L14 0.5" fill="none" stroke="#2a5cc0" stroke-width="1.8"/>
</svg>
<div class="t" style="left:311px;top:720px;color:#333">русский</div>
<div class="a" style="left:362px;top:718px;width:1px;height:19px;background:#a9aeb4;box-shadow:1px 0 0 #f4f6f8"></div>
<div class="a" style="left:747px;top:718px;width:1px;height:19px;background:#a9aeb4;box-shadow:1px 0 0 #f4f6f8"></div>
<div class="a" style="left:751px;top:718px;width:17px;height:18px;border:1px solid #e0b040;border-radius:2px;background:linear-gradient(#fff0b0,#fcd65c)"></div>
<svg class="a" style="left:754px;top:721px" width="12" height="11" viewBox="0 0 12 11"><rect x="0.5" y="0.5" width="11" height="10" fill="#fff" stroke="#333"/><rect x="2" y="2" width="3" height="7" fill="#333"/><rect x="6" y="2" width="4" height="4" fill="none" stroke="#333" stroke-width="0.8"/></svg>
<svg class="a" style="left:773px;top:721px" width="11" height="11" viewBox="0 0 11 11"><rect x="0.5" y="0.5" width="4" height="4" fill="none" stroke="#333"/><rect x="6.5" y="0.5" width="4" height="4" fill="none" stroke="#333"/><rect x="0.5" y="6.5" width="4" height="4" fill="none" stroke="#333"/><rect x="6.5" y="6.5" width="4" height="4" fill="none" stroke="#333"/></svg>
<svg class="a" style="left:791px;top:721px" width="12" height="11" viewBox="0 0 12 11"><path d="M0.5 1.5 C2.5 0.5 4.5 0.5 6 1.5 C7.5 0.5 9.5 0.5 11.5 1.5V10 C9.5 9 7.5 9 6 10 C4.5 9 2.5 9 0.5 10z M6 1.5V10" fill="#fff" stroke="#333" stroke-width="0.9"/><path d="M2 4h2.5M2 6h2.5M7.5 4h2.5M7.5 6h2.5" stroke="#333" stroke-width="0.6"/></svg>
<svg class="a" style="left:809px;top:721px" width="12" height="12" viewBox="0 0 12 12"><rect x="0.5" y="0.5" width="11" height="6.5" fill="#fff" stroke="#333"/><path d="M6 7v3M3 11.5h6" stroke="#333" stroke-width="1"/></svg>
<div class="t" style="left:834px;top:720px;font-size:10.6px;color:#333">61%</div>
<svg class="a" style="left:862px;top:717px" width="162" height="20" viewBox="0 0 162 20">
<defs><linearGradient id="zg" x1="0" y1="0" x2="0" y2="1"><stop offset="0" stop-color="#fff"/><stop offset="1" stop-color="#d6dae0"/></linearGradient></defs>
<path d="M16.5 9.5H117" stroke="#8a8f96" stroke-width="1"/>
<path d="M67 6.5V12.5" stroke="#8a8f96" stroke-width="1"/>
<circle cx="9" cy="9.5" r="7.5" fill="url(#zg)" stroke="#6e737a" stroke-width="1"/>
<path d="M5 9.5h8" stroke="#333" stroke-width="2"/>
<circle cx="125" cy="9.5" r="7.5" fill="url(#zg)" stroke="#6e737a" stroke-width="1"/>
<path d="M121 9.5h8M125 5.5v8" stroke="#333" stroke-width="2"/>
<path d="M43.5 3.5h8v7.5l-4 4l-4-4z" fill="url(#zg)" stroke="#6e737a" stroke-width="1"/>
<rect x="141" y="2.5" width="16" height="15" rx="2" fill="#e9ecef" stroke="#6e737a" stroke-width="1"/>
<path d="M145 6.5h2M145 6.5v2M153 6.5h-2M153 6.5v2M145 13.5h2M145 13.5v-2M153 13.5h-2M153 13.5v-2M149 8v4M147 10h4" stroke="#333" stroke-width="0.8"/>
</svg>
</body></html>
